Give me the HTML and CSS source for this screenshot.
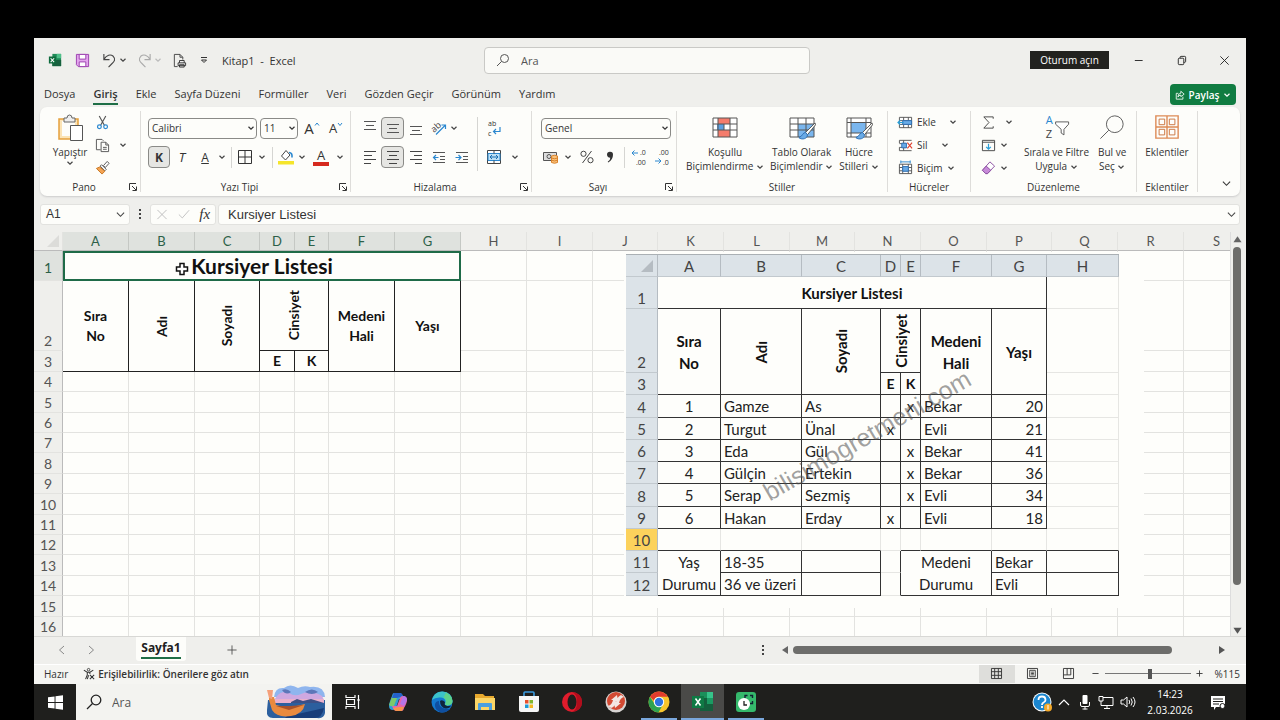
FILE: index.html
```html
<!DOCTYPE html>
<html lang="tr">
<head>
<meta charset="utf-8">
<title>Kitap1 - Excel</title>
<link rel="stylesheet" href="styles.css">
</head>
<body>
<svg class="defs" aria-hidden="true">
  <symbol id="chev" viewBox="0 0 8 8"><path d="M1.5 2.8 4 5.2 6.500 2.800" fill="none" stroke="currentColor" stroke-width="1.2"/></symbol>
  <symbol id="launch" viewBox="0 0 8 8"><path d="M.5 7V.5H7M3 3l4 4M7.500 3.500v4h-4" fill="none" stroke="#333" stroke-width="1"/></symbol>
  <symbol id="brush" viewBox="0 0 20 20"><path d="M19 1 9 11l2 2.500L19.500 3z" fill="#fdfdfa" stroke="#555" stroke-width="1"/><path d="M9 11c-3 0-3 4-7 5.500 3 2.500 9 1.500 9-3z" fill="#6aabe6" stroke="#2c6fb5" stroke-width="1"/></symbol>
</svg>
<div class="screen">
<main class="app">
  <header class="titlebar">
    <div class="quick">
      <svg class="i-xl" viewBox="0 0 16 16"><path d="M5 1h10v14H5z" fill="#1e8a57"/><path d="M10 1h5v5h-5z" fill="#4fc08a"/><path d="M5 8h10v7H5z" fill="#17603e"/><path d="M1 4h8v8H1z" fill="#0e6b3d"/><path d="m3 6 4 4.500M7 6l-4 4.500" stroke="#fff" stroke-width="1.200"/></svg>
      <button class="tb-save" aria-label="Kaydet"><svg viewBox="0 0 16 16"><path d="M1.500 1.500h13v13h-11l-2-2z" fill="#e3a5ee" stroke="#9b3fae"/><path d="M4.500 1.500h7v5h-7zM4.500 9.500h7v5h-7z" fill="#fff" stroke="#9b3fae"/></svg></button>
      <button class="tb-undo" aria-label="Geri al"><svg viewBox="0 0 16 16"><path d="M2 1v6h6M2.200 6.500C5 2 9 1 12 3.500c3 3 1 6-1.500 8L7 15" fill="none" stroke="#444" stroke-width="1.200"/></svg><svg class="chev"><use href="#chev"/></svg></button>
      <button class="tb-undo dim" aria-label="Yinele"><svg viewBox="0 0 16 16"><path d="M14 1v6H8M13.800 6.500C11 2 7 1 4 3.500c-3 3-1 6 1.500 8L9 15" fill="none" stroke="#aaa" stroke-width="1.200"/></svg><svg class="chev"><use href="#chev"/></svg></button>
      <button class="tb-print" aria-label="Baskı önizleme"><svg viewBox="0 0 16 16"><path d="M6 14.500H2.500v-13h6l3 3V7M8.500 1.500v3h3" fill="none" stroke="#444"/><path d="M6.500 10.500h8v3h-8zM8 10.500V8h5v2.500M8 12.500h5v2.500H8z" fill="#eee" stroke="#333"/></svg></button>
      <button class="tb-more" aria-label="Özelleştir"><svg viewBox="0 0 10 10"><path d="M2 2.500h6M2.500 5 5 7.500 7.500 5z" fill="none" stroke="#333"/></svg></button>
      <h1>Kitap1&nbsp; -&nbsp; Excel</h1>
    </div>
    <label class="search"><svg viewBox="0 0 14 14"><circle cx="8.500" cy="5.500" r="4" fill="none" stroke="#555"/><path d="M5.500 8.500 1 13" stroke="#555"/></svg><input type="search" placeholder="Ara" aria-label="Ara"></label>
    <div class="win">
      <button class="signin">Oturum açın</button>
      <button aria-label="Küçült"><svg viewBox="0 0 12 12"><path d="M2 6h8.500" stroke="#222"/></svg></button>
      <button aria-label="Geri yükle"><svg viewBox="0 0 12 12"><path d="M2.500 4.500q0-1 1-1h4q1 0 1 1v5q0 1-1 1h-4q-1 0-1-1zM4.500 3.500v-1q0-1 1-1h4q1 0 1 1v4.500q0 1-1 1h-1" fill="none" stroke="#222"/></svg></button>
      <button aria-label="Kapat"><svg viewBox="0 0 12 12"><path d="m1.500 1.500 9 9m0-9-9 9" stroke="#222"/></svg></button>
    </div>
  </header>
  <nav class="tabs">
    <a href="#">Dosya</a><a href="#" class="on">Giriş</a><a href="#">Ekle</a><a href="#">Sayfa Düzeni</a><a href="#">Formüller</a><a href="#">Veri</a><a href="#">Gözden Geçir</a><a href="#">Görünüm</a><a href="#">Yardım</a>
    <button class="share"><svg class="s10" viewBox="0 0 12 12"><path d="M4 4H1.500v7h8V8M7 1.500 11 5 7 8V6.200Q4.500 6 3.500 8.500 3.500 4 7 3.800z" fill="none" stroke="#fff"/></svg>Paylaş<svg class="chev"><use href="#chev"/></svg></button>
  </nav>

  <section class="ribbon">
    <div class="group g-pano">
      <div class="body">
        <button class="big"><svg class="s28" viewBox="0 0 28 28"><path d="M3 5h19v20H3z" fill="#fbe3b5" stroke="#e5a03c" stroke-width="1.500"/><path d="M6 7h13v15H6z" fill="#fdfdfa"/><path d="M8 8V4h3q0-3 2.500-3T16 4h3v4z" fill="#eee" stroke="#666"/><path d="M14.500 11.500h12v15h-12z" fill="#fff" stroke="#555"/></svg><span>Yapıştır</span><svg class="chev"><use href="#chev"/></svg></button>
        <div class="three">
          <button aria-label="Kes"><svg class="s16" viewBox="0 0 16 16"><path d="M4.500 1 10 11M11.500 1 6 11" stroke="#555" stroke-width="1.200"/><circle cx="4.700" cy="12.500" r="2" fill="none" stroke="#2b88d0" stroke-width="1.300"/><circle cx="11.300" cy="12.500" r="2" fill="none" stroke="#2b88d0" stroke-width="1.300"/></svg></button>
          <button aria-label="Kopyala"><svg class="s16" viewBox="0 0 16 16"><path d="M6 12.500H1.500v-11h6L9 3M6.500 4.500h5l3 3v7h-8zM11.500 4.500v3h3M8.500 10h4M8.500 12h4" fill="none" stroke="#555"/></svg><svg class="chev far"><use href="#chev"/></svg></button>
          <button aria-label="Biçim boyacısı"><svg class="s16" viewBox="0 0 16 16"><path d="m9 6 4-4.500 2 2L11 8z" fill="#fff" stroke="#555"/><path d="m7 5 5 5-1.500 1.500-5-5z" fill="#fff" stroke="#555"/><path d="M5 7.500 1.500 9l6 6 3-3z" fill="#f4a455" stroke="#c9741c"/></svg></button>
        </div>
      </div>
      <footer><span>Pano</span><button aria-label="Pano ayarları"><svg><use href="#launch"/></svg></button></footer>
    </div>

    <div class="group g-font">
      <div class="body col">
        <div class="row"><select class="w-font" aria-label="Yazı tipi"><option>Calibri</option></select><select class="w-size" aria-label="Yazı boyutu"><option>11</option></select><button class="w24 glyph">A<svg class="sup" viewBox="0 0 6 6"><path d="M1 4.500 3 2l2 2.500" fill="none" stroke="#2b88d0"/></svg></button><button class="w24 glyph small">A<svg class="sup" viewBox="0 0 6 6"><path d="M1 2l2 2.500L5 2" fill="none" stroke="#2b88d0"/></svg></button></div>
        <div class="row"><button class="w22 on bold">K</button><button class="w24 it">T</button><button class="w22 un">A</button><button class="w12" aria-label="Altı çizili seçenekleri"><svg class="chev"><use href="#chev"/></svg></button><i class="vr"></i><button class="w20" aria-label="Kenarlıklar"><svg class="s16" viewBox="0 0 16 16"><path d="M1.500 1.500h13v13h-13zM8 1.500v13M1.500 8h13" fill="none" stroke="#333"/></svg></button><button class="w14" aria-label="Kenarlık seçenekleri"><svg class="chev"><use href="#chev"/></svg></button><i class="vr"></i><button class="w20" aria-label="Dolgu rengi"><svg class="s16" viewBox="0 0 16 16"><path d="M0 12h16v3.500H0z" fill="#f5e52a"/><path d="M8 1.500 3.500 7 7.500 11 12 6z" fill="#fff" stroke="#444"/><path d="M11 3.500q3.500 0 3 5" fill="none" stroke="#2b88d0" stroke-width="1.600"/></svg></button><button class="w12" aria-label="Dolgu seçenekleri"><svg class="chev"><use href="#chev"/></svg></button><button class="w24 fc" aria-label="Yazı tipi rengi">A</button><button class="w12" aria-label="Renk seçenekleri"><svg class="chev"><use href="#chev"/></svg></button></div>
      </div>
      <footer><span>Yazı Tipi</span><button aria-label="Yazı tipi ayarları"><svg><use href="#launch"/></svg></button></footer>
    </div>

    <div class="group g-align">
      <div class="body">
        <div class="col">
          <div class="row"><button class="w23" aria-label="Üste hizala"><svg class="s14" viewBox="0 0 14 14"><path d="M1 .5h12M3 4.500h8M1 8.500h12" stroke="#555"/></svg></button><button class="w23 on" aria-label="Ortaya hizala"><svg class="s14" viewBox="0 0 14 14"><path d="M1 3.500h12M3 7.500h8M1 11.500h12" stroke="#555"/></svg></button><button class="w23" aria-label="Alta hizala"><svg class="s14" viewBox="0 0 14 14"><path d="M1 5.500h12M3 9.500h8M1 13.500h12" stroke="#555"/></svg></button><button class="w23" aria-label="Yönlendirme"><svg class="s16" viewBox="0 0 16 16"><path d="M5 14.500 14 5.500M10.500 5h4v4" fill="none" stroke="#2b88d0" stroke-width="1.200"/><text x="0" y="11" transform="rotate(-42 4 8)" class="t9">ab</text></svg></button><svg class="chev"><use href="#chev"/></svg></div>
          <div class="row"><button class="w23" aria-label="Sola hizala"><svg class="s14" viewBox="0 0 14 14"><path d="M1 1.500h12M1 5.500h8M1 9.500h12M1 13.500h7" stroke="#444"/></svg></button><button class="w23 on" aria-label="Ortala"><svg class="s14" viewBox="0 0 14 14"><path d="M1 1.500h12M3 5.500h8M1 9.500h12M3 13.500h8" stroke="#444"/></svg></button><button class="w23" aria-label="Sağa hizala"><svg class="s14" viewBox="0 0 14 14"><path d="M1 1.500h12M5 5.500h8M1 9.500h12M6 13.500h7" stroke="#444"/></svg></button><button class="w23" aria-label="Girintiyi azalt"><svg class="s14" viewBox="0 0 14 14"><path d="M1 2.500h12M8 6.500h5M8 9.500h5M1 12.500h12" stroke="#555"/><path d="M6.500 7.500h-5M4 5 1.500 7.500 4 10" fill="none" stroke="#2b88d0" stroke-width="1.200"/></svg></button><button class="w23" aria-label="Girintiyi artır"><svg class="s14" viewBox="0 0 14 14"><path d="M1 2.500h12M8 6.500h5M8 9.500h5M1 12.500h12" stroke="#555"/><path d="M.5 7.500h5M3.500 5 6 7.500 3.500 10" fill="none" stroke="#2b88d0" stroke-width="1.200"/></svg></button></div>
        </div>
        <i class="vr tall"></i>
        <div class="col">
          <div class="row"><button class="w23" aria-label="Metni kaydır"><svg class="s16" viewBox="0 0 16 16"><text x="2" y="6" class="t8">ab</text><text x="2" y="16" class="t8">c</text><path d="M14 7v4.500H8M10 9l-2.500 2.500L10 14" fill="none" stroke="#2b88d0" stroke-width="1.200"/></svg></button></div>
          <div class="row"><button class="w23" aria-label="Birleştir"><svg class="s14" viewBox="0 0 14 14"><path d="M.5.5h13v13H.5z" fill="#fff" stroke="#444"/><path d="M1 3.500h12v7H1z" fill="#bfe1f5" stroke="#2b88d0"/><path d="M7 .5v3M7 10.500v3" stroke="#444"/><path d="M3 7h8M5 5 3 7l2 2M9 5l2 2-2 2" fill="none" stroke="#1b6eb0"/></svg></button><button class="w20" aria-label="Birleştir seçenekleri"><svg class="chev"><use href="#chev"/></svg></button></div>
        </div>
      </div>
      <footer><span>Hizalama</span><button aria-label="Hizalama ayarları"><svg><use href="#launch"/></svg></button></footer>
    </div>

    <div class="group g-num">
      <div class="body col">
        <div class="row"><select class="w-num" aria-label="Sayı biçimi"><option>Genel</option></select></div>
        <div class="row"><button class="w20" aria-label="Para birimi"><svg class="s16" viewBox="0 0 16 16"><path d="M.5 3.500h13v8H.5z" fill="#ddd" stroke="#555"/><circle cx="6" cy="7.500" r="2" fill="none" stroke="#555"/><path d="M8.500 7q3.500-1.500 6 0v6.500q-3 1.500-6 0z" fill="#f9c27c" stroke="#d9822b"/><path d="M8.500 9q3 1.500 6 0M8.500 11.200q3 1.500 6 0" fill="none" stroke="#d9822b"/></svg></button><button class="w14" aria-label="Para birimi seçenekleri"><svg class="chev"><use href="#chev"/></svg></button><button class="w24" aria-label="Yüzde"><svg class="s14" viewBox="0 0 14 14"><circle cx="3.500" cy="3.800" r="2.600" fill="none" stroke="#444"/><circle cx="10.500" cy="10.200" r="2.600" fill="none" stroke="#444"/><path d="M11.500 1 2.500 13" stroke="#444"/></svg></button><button class="w22" aria-label="Virgül"><svg class="s14" viewBox="0 0 14 14"><path d="M4 4.500a3 3 0 1 1 6 .3q0 5-4.800 7.700l-.5-.8Q7.500 10 7.300 7.700 4 7.500 4 4.500z" fill="#333"/></svg></button><i class="vr"></i><button class="w22" aria-label="Ondalık artır"><svg class="s16" viewBox="0 0 16 16"><text x="9" y="6" class="t8">.0</text><text x="5" y="16" class="t8">.00</text><path d="M7 4H1M3.500 1.500 1 4l2.500 2.500" fill="none" stroke="#2b88d0"/></svg></button><button class="w24" aria-label="Ondalık azalt"><svg class="s16" viewBox="0 0 16 16"><text x="5" y="6" class="t8">.00</text><text x="9" y="16" class="t8">.0</text><path d="M1 12h6M4.500 9.500 7 12l-2.500 2.500" fill="none" stroke="#2b88d0"/></svg></button></div>
      </div>
      <footer><span>Sayı</span><button aria-label="Sayı ayarları"><svg><use href="#launch"/></svg></button></footer>
    </div>

    <div class="group g-style">
      <div class="body">
        <button class="big"><svg class="s28" viewBox="0 0 28 28"><path d="M2 4h24v19H2z" fill="#fff"/><path d="M7 4h12v6H7zM7 16h12v7H7z" fill="#f47c6c"/><path d="M6 10h7v6H6z" fill="#5c9fe0"/><path d="M2 4h24v19H2zM2 10h24M2 16h24M7 4v19M13 10v6M19 4v19" fill="none" stroke="#555"/></svg><span>Koşullu<br>Biçimlendirme <svg class="chev"><use href="#chev"/></svg></span></button>
        <button class="big"><svg class="s28" viewBox="0 0 28 28"><path d="M2 4h24v19H2z" fill="#fff"/><path d="M10 10h16v13H10z" fill="#7ab6ee"/><path d="M2 4h24v19H2zM2 10h24M2 16h24M10 4v19M18 4v19" fill="none" stroke="#555"/><use href="#brush" x="9" y="8" width="19" height="19"/></svg><span>Tablo Olarak<br>Biçimlendir <svg class="chev"><use href="#chev"/></svg></span></button>
        <button class="big"><svg class="s28" viewBox="0 0 28 28"><path d="M2 4h24v19H2z" fill="#fff" stroke="#555"/><path d="M6 9h15v10H6z" fill="#7ab6ee"/><path d="M2 8.500h24M2 19h24M6 4v19M21 4v19" stroke="#555"/><use href="#brush" x="9" y="8" width="19" height="19"/></svg><span>Hücre<br>Stilleri <svg class="chev"><use href="#chev"/></svg></span></button>
      </div>
      <footer><span>Stiller</span></footer>
    </div>

    <div class="group g-cell">
      <div class="body three">
        <button><svg class="s16" viewBox="0 0 16 16"><path d="M1.500 2.500h13v11h-13zM1.500 6h13M1.500 10h13M6 2.500v11M11 2.500v11" fill="#fff" stroke="#555"/><path d="M5 6h9.500v4H5z" fill="#6aabe6" stroke="#2c6fb5"/><path d="M6 8H0M2.500 5.500 0 8l2.500 2.500" fill="none" stroke="#2b9fd8" stroke-width="1.300"/></svg>Ekle<svg class="chev c1"><use href="#chev"/></svg></button>
        <button><svg class="s16" viewBox="0 0 16 16"><path d="M1.500 2.500h13M1.500 13.500h13M1.500 6H9M1.500 10H9M6 2.500v11M1.500 2.500v3M1.500 10v3.500" fill="none" stroke="#555"/><path d="M4 5.500h5v5H4z" fill="#6aabe6" stroke="#2c6fb5"/><path d="m10 5 5 6M15 5l-5 6" stroke="#e0402f" stroke-width="1.200"/></svg>Sil<svg class="chev c2"><use href="#chev"/></svg></button>
        <button><svg class="s16" viewBox="0 0 16 16"><path d="M1.500 4.500h13v10h-13zM1.500 8h13M1.500 11.500h13M5 4.500v10M11 4.500v10" fill="#fff" stroke="#555"/><path d="M5 7h6v5H5z" fill="#6aabe6" stroke="#2c6fb5"/><path d="M3 .5v3M13 .5v3M3 2h10" stroke="#2b88d0"/></svg>Biçim<svg class="chev c3"><use href="#chev"/></svg></button>
      </div>
      <footer><span>Hücreler</span></footer>
    </div>

    <div class="group g-edit">
      <div class="body">
        <div class="three">
          <button aria-label="Otomatik toplam"><svg class="s16" viewBox="0 0 16 16"><path d="M13 4V2H3l5.500 6L3 14h10v-2" fill="none" stroke="#444"/></svg><svg class="chev far"><use href="#chev"/></svg></button>
          <button aria-label="Doldur"><svg class="s16" viewBox="0 0 16 16"><path d="M1.500 2.500h13v11h-13zM1.500 4.500h13" fill="none" stroke="#444"/><path d="M8 6v6M5.500 9.500 8 12l2.500-2.500" fill="none" stroke="#2b9fd8" stroke-width="1.300"/></svg><svg class="chev"><use href="#chev"/></svg></button>
          <button aria-label="Temizle"><svg class="s16" viewBox="0 0 16 16"><path d="m9.500 2 5 4.500-7.500 8H5L1.500 11z" fill="#fff" stroke="#8b4fa0"/><path d="m5.500 6.500 5 4.500L7 14.500H5L1.500 11z" fill="#c78bd8" stroke="#8b4fa0"/></svg><svg class="chev"><use href="#chev"/></svg></button>
        </div>
        <button class="big"><svg class="s28" viewBox="0 0 28 28"><text x="2" y="11" class="t12 blue">A</text><text x="2" y="26" class="t12">Z</text><path d="M12.500 8.500h14v2.500l-5 5.500v6l-3-2v-4l-6-5.500z" fill="#fff" stroke="#555"/></svg><span>Sırala ve Filtre<br>Uygula <svg class="chev"><use href="#chev"/></svg></span></button>
        <button class="big"><svg class="s28" viewBox="0 0 28 28"><circle cx="17" cy="11" r="9" fill="none" stroke="#555"/><path d="M10.500 17.500 1.500 26.500" stroke="#555"/></svg><span>Bul ve<br>Seç <svg class="chev"><use href="#chev"/></svg></span></button>
      </div>
      <footer><span>Düzenleme</span></footer>
    </div>

    <div class="group g-add">
      <div class="body">
        <button class="big"><svg class="s28" viewBox="0 0 28 28"><path d="M2 2h24v24H2zM14 2v24M2 14h24" fill="none" stroke="#dd8a55" stroke-width="1.500"/><path d="M5.500 5.500h6v6h-6zM16.500 5.500h6v6h-6zM5.500 16.500h6v6h-6zM16.500 16.500h6v6h-6z" fill="none" stroke="#c9733c"/></svg><span>Eklentiler</span></button>
      </div>
      <footer><span>Eklentiler</span></footer>
    </div>
    <button class="collapse" aria-label="Şeridi daralt"><svg viewBox="0 0 10 10"><path d="m1 3 4 4 4-4" fill="none" stroke="#333" stroke-width="1.200"/></svg></button>
  </section>

  <section class="formula">
    <button class="namebox">A1<svg viewBox="0 0 10 10"><path d="m1 3 4 4 4-4" fill="none" stroke="#444" stroke-width="1.200"/></svg></button>
    <svg class="dots" viewBox="0 0 4 12"><path d="M1 1h2v2H1zM1 5h2v2H1zM1 9h2v2H1z" fill="#444"/></svg>
    <div class="fx"><button aria-label="İptal"><svg viewBox="0 0 12 12"><path d="m1 1 10 10M11 1 1 11" stroke="#bbb"/></svg></button><button aria-label="Gir"><svg viewBox="0 0 14 12"><path d="m1 6 4 4 8-9" fill="none" stroke="#bbb"/></svg></button><button class="fxb">fx</button></div>
    <label class="fbar"><input value="Kursiyer Listesi" aria-label="Formül çubuğu"><svg viewBox="0 0 10 10"><path d="m1 3 4 4 4-4" fill="none" stroke="#444" stroke-width="1.200"/></svg></label>
  </section>

  <section class="sheet">
    <div class="view">
      <table class="grid">
        <colgroup><col class="c29"><col><col><col class="c65"><col class="c35"><col class="c34"><col><col><col><col><col class="c65"><col><col><col class="c65"><col><col><col class="c65"><col><col><col></colgroup>
        <thead><tr><th class="corner"><svg viewBox="0 0 12 12"><path d="M12 0v12H0z" fill="#dcdcd9"/></svg></th></tr></thead>
        <tbody>
          <tr class="r1"><th class="sel">1</th><td class="title" colspan="7">Kursiyer Listesi</td></tr>
          <tr class="r2"><th>2</th><td class="h" rowspan="2">Sıra<br>No</td><td class="h" rowspan="2"><span class="rot">Adı</span></td><td class="h" rowspan="2"><span class="rot">Soyadı</span></td><td class="h" colspan="2"><span class="rot">Cinsiyet</span></td><td class="h" rowspan="2">Medeni<br>Hali</td><td class="h" rowspan="2">Yaşı</td></tr>
          <tr class="r3"><th>3</th><td class="h">E</td><td class="h">K</td></tr>
        </tbody>
      </table>
      <svg class="cursor" viewBox="0 0 14 14"><path d="M5 1.500h4V5h3.500v4H9v3.500H5V9H1.500V5H5z" fill="#fff" stroke="#111" stroke-width="1.500"/></svg>
      <figure class="sample">
        <table class="mini">
          <colgroup><col class="m32"><col class="m63"><col class="m81"><col class="m79"><col class="m20"><col class="m20"><col class="m71"><col class="m55"><col class="m72"></colgroup>
          <thead><tr><th><svg viewBox="0 0 12 12"><path d="M12 0v12H0z" fill="#b5bcc2"/></svg></th><th>A</th><th>B</th><th>C</th><th>D</th><th>E</th><th>F</th><th>G</th><th>H</th></tr></thead>
          <tbody>
            <tr class="q1"><th>1</th><td colspan="7" class="k c b">Kursiyer Listesi</td><td></td></tr>
            <tr class="q2"><th>2</th><td rowspan="2" class="k c b">Sıra<br>No</td><td rowspan="2" class="k c b"><span class="rot">Adı</span></td><td rowspan="2" class="k c b"><span class="rot">Soyadı</span></td><td colspan="2" class="k c b"><span class="rot">Cinsiyet</span></td><td rowspan="2" class="k c b">Medeni<br>Hali</td><td rowspan="2" class="k c b">Yaşı</td><td></td></tr>
            <tr><th>3</th><td class="k c b s">E</td><td class="k c b s">K</td><td></td></tr>
            <tr><th>4</th><td class="k c">1</td><td class="k">Gamze</td><td class="k">As</td><td class="k c"></td><td class="k c">x</td><td class="k">Bekar</td><td class="k r">20</td><td></td></tr>
            <tr><th>5</th><td class="k c">2</td><td class="k">Turgut</td><td class="k">Ünal</td><td class="k c">x</td><td class="k c"></td><td class="k">Evli</td><td class="k r">21</td><td></td></tr>
            <tr><th>6</th><td class="k c">3</td><td class="k">Eda</td><td class="k">Gül</td><td class="k c"></td><td class="k c">x</td><td class="k">Bekar</td><td class="k r">41</td><td></td></tr>
            <tr><th>7</th><td class="k c">4</td><td class="k">Gülçin</td><td class="k">Ertekin</td><td class="k c"></td><td class="k c">x</td><td class="k">Bekar</td><td class="k r">36</td><td></td></tr>
            <tr><th>8</th><td class="k c">5</td><td class="k">Serap</td><td class="k">Sezmiş</td><td class="k c"></td><td class="k c">x</td><td class="k">Evli</td><td class="k r">34</td><td></td></tr>
            <tr><th>9</th><td class="k c">6</td><td class="k">Hakan</td><td class="k">Erday</td><td class="k c">x</td><td class="k c"></td><td class="k">Evli</td><td class="k r">18</td><td></td></tr>
            <tr><th class="gold">10</th><td class="kb"></td><td class="kb"></td><td class="kb"></td><td></td><td class="kb"></td><td class="kb"></td><td class="kb"></td><td class="kb"></td></tr>
            <tr><th>11</th><td rowspan="2" class="k c two">Yaş<br>Durumu</td><td class="k">18-35</td><td class="k"></td><td class="kr"></td><td colspan="2" rowspan="2" class="k c two">Medeni<br>Durumu</td><td class="k">Bekar</td><td class="k"></td></tr>
            <tr><th>12</th><td class="k">36 ve üzeri</td><td class="k"></td><td class="kr"></td><td class="k">Evli</td><td class="k"></td></tr>
          </tbody>
        </table>
        <span class="mark">bilisimogretmeni.com</span>
      </figure>
    </div>
    <div class="vscroll"><svg viewBox="0 0 10 8"><path d="m5 1 4.500 6.500h-9z" fill="#666"/></svg><i></i><svg viewBox="0 0 10 8"><path d="m5 7 4.500-6.500h-9z" fill="#555"/></svg></div>
  </section>

  <section class="sheets">
    <button class="nav" aria-label="Önceki"><svg viewBox="0 0 10 10"><path d="M7 1 2.500 5 7 9" fill="none" stroke="#888"/></svg></button>
    <button class="nav" aria-label="Sonraki"><svg viewBox="0 0 10 10"><path d="m3 1 4.500 4L3 9" fill="none" stroke="#888"/></svg></button>
    <button class="stab"><span>Sayfa1</span></button>
    <button class="add" aria-label="Yeni sayfa"><svg viewBox="0 0 12 12"><path d="M6 .5v11M.5 6h11" stroke="#444"/></svg></button>
    <div class="hscroll"><svg class="dots" viewBox="0 0 4 12"><path d="M1 1h2v2H1zM1 5h2v2H1zM1 9h2v2H1z" fill="#444"/></svg><svg class="ar" viewBox="0 0 8 10"><path d="M1 5 7 1v8z" fill="#666"/></svg><i></i><svg class="ar" viewBox="0 0 8 10"><path d="M7 5 1 1v8z" fill="#555"/></svg></div>
  </section>

  <section class="status">
    <span>Hazır</span>
    <button class="acc"><svg class="s14" viewBox="0 0 14 14"><circle cx="6.500" cy="2" r="1.500" fill="none" stroke="#333"/><path d="M1 2.500 5 5v3l-2 5M12 2.500 8 5v2M5 5h3M6.500 8.500 5 13M8 8l5 5M13 8l-5 5" fill="none" stroke="#333" stroke-width="1.200"/></svg>Erişilebilirlik: Önerilere göz atın</button>
    <div class="zoom">
      <button class="vw on" aria-label="Normal"><svg viewBox="0 0 12 12"><path d="M.5.500h11v11H.5zM.5 4h11M.5 8h11M4 .5v11M8 .5v11" fill="none" stroke="#333"/></svg></button>
      <button class="vw" aria-label="Sayfa düzeni"><svg viewBox="0 0 12 12"><path d="M.5.500h11v11H.5zM3 2.500h6v7H3zM4.500 4.500h3M4.500 6h3M4.500 7.500h3" fill="none" stroke="#333"/></svg></button>
      <button class="vw" aria-label="Sayfa sonu"><svg viewBox="0 0 12 12"><path d="M.5.500h11v11H.5zM.5 7.500h8v-7M4.500.500v7" fill="none" stroke="#333"/></svg></button>
      <button class="pm" aria-label="Uzaklaştır"><svg viewBox="0 0 8 8"><path d="M.5 4h7" stroke="#333"/></svg></button>
      <input type="range" min="10" max="220" value="120" aria-label="Yakınlaştırma">
      <button class="pm" aria-label="Yakınlaştır"><svg viewBox="0 0 8 8"><path d="M.5 4h7M4 .5v7" stroke="#333"/></svg></button>
      <span>%115</span>
    </div>
  </section>
</main>

<nav class="taskbar">
  <button class="start" aria-label="Başlat"><svg viewBox="0 0 16 16"><path d="m0 2.500 7-1v6H0zM8 1.400 16 .2v7.300H8zM0 8.500h7v6l-7-1zM8 8.500h8v7.300l-8-1.200z" fill="#fff"/></svg></button>
  <label class="tsearch"><svg class="s16" viewBox="0 0 16 16"><circle cx="10" cy="6" r="4.800" fill="none" stroke="#222" stroke-width="1.300"/><path d="M6.500 9.500 1 15" stroke="#222" stroke-width="1.300"/></svg><input type="search" placeholder="Ara" aria-label="Windows'ta ara">
    <svg class="boat" viewBox="0 0 62 34"><path d="M9 12Q10 2 19 3q6-5 14 0 6-3 12-1 14-2 15 10z" fill="#8fb5ee"/><path d="M12 11q5-6 12-3 6 4 12 1 10-5 21 2l2 4H9z" fill="#cfa8e0"/><path d="M17 5q5-2 9 2-5 4-9-2zM40 7q7-5 13 0-6 4-13 0z" fill="#5d76b8"/><path d="M3 15h57v13q-1 6-8 5H8q-7 0-6-8z" fill="#2c5f9e"/><path d="M7 14h52v4H7z" fill="#e9b1cd"/><path d="m26 17 6-3 6 2 8-2 13 4H26z" fill="#3c4f86"/><path d="M22 31q16-3 37-8-2 10-9 10H20z" fill="#173d7a"/><path d="M4 12h5l2 8q12 4 29-1-2 10-14 12-14 2-19-6L4 15z" fill="#e98a3e"/><path d="m11 21 13 4 15-5-14 1z" fill="#a8512a"/><path d="M2 5h6l-1 9-3-1z" fill="#f5a07a"/></svg>
  </label>
  <div class="apps">
    <button aria-label="Görev görünümü"><svg class="s16" viewBox="0 0 16 16"><path d="M1 1v2.500h9V1M1 15v-2.500h9V15M1.500 5.500h8v5h-8zM13.500 1v14M12 6h3" fill="none" stroke="#fff" stroke-width="1.200"/></svg></button>
    <button aria-label="Copilot"><svg class="s22" viewBox="0 0 22 22"><path d="M7 2h6q2 0 3 3l1 3h-5L9 17q-1 2-3 2-4 0-4-4 0-3 3-10 .500-3 2-3z" fill="#2f9bd8"/><path d="M5 6 2 14q2 2 5 1l3-8z" fill="#7cc96b"/><path d="M7 2h6q2 0 3 3l-6 2H5z" fill="#2460c9"/><path d="M15 20H9q-2 0-3-3l-1-2h5l3-8q1-2 3-2 4 0 4 4 0 3-3 8-.500 3-2 3z" fill="#e765a8"/><path d="m17 15 3-6q0-4-4-4l-3 8z" fill="#b674e8"/><path d="M15 20H9q-2 0-3-3l6-1h5z" fill="#f7934d"/></svg></button>
    <button aria-label="Edge"><svg class="s22" viewBox="0 0 22 22"><circle cx="11" cy="11" r="10.500" fill="#1479cf"/><path d="M1 9Q3 .5 11.500.5 21 1 21.500 10q0 4-5 4.500-3.500 0-2-2.500Q15 7 10 6.500 4 6 1 9z" fill="#3cc3c9"/><path d="M15 1.500q6 3 6.500 8.500 0 4-5 4.500-3.500 0-2-2.500 1.500-4-2-5.500z" fill="#5fd38a"/><path d="M8 10q-1 8 11 8-4 4.500-10 3.200Q3 18 4 13q1-3 4-3z" fill="#0f4fa0"/><path d="M9 10q2-2 5 1-1 3 1 3.500 2 1 5 0-1 3-5 3-6-1-6-7.500z" fill="#10243d"/></svg></button>
    <button aria-label="Dosya Gezgini"><svg class="s22" viewBox="0 0 22 22"><path d="M1 3h8l2 2h9v14H1z" fill="#e8a92e"/><path d="M1 7h20v12H1z" fill="#fbd566"/><path d="M4 19v-6q0-1 1-1h12q1 0 1 1v6h-3v-3H7v3z" fill="#4a9fe0"/></svg></button>
    <button aria-label="Microsoft Store"><svg class="s22" viewBox="0 0 22 22"><path d="M6 6V2q0-1 1-1h8q1 0 1 1v4" fill="none" stroke="#3a9be0" stroke-width="1.600"/><path d="M1 5h20v14q0 2-2 2H3q-2 0-2-2z" fill="#f6f6f6"/><path d="M7 9h3.500v3.500H7z" fill="#e8502c"/><path d="M11.500 9H15v3.500h-3.500z" fill="#7fb72d"/><path d="M7 13.500h3.500V17H7z" fill="#1c9bd8"/><path d="M11.500 13.500H15V17h-3.500z" fill="#f5b81f"/></svg></button>
    <button aria-label="Opera"><svg class="s22" viewBox="0 0 22 22"><circle cx="11" cy="11" r="10" fill="#e01c2c"/><path d="M11 1q10 1 10 10t-10 10q5-2 5-10T11 1z" fill="#b20d1c"/><ellipse cx="11" cy="11" rx="4.500" ry="7.500" fill="#1f1f1d"/></svg></button>
    <button aria-label="Dönüştürücü"><svg class="s22" viewBox="0 0 22 22"><circle cx="11" cy="11" r="10.500" fill="#d8d4d2"/><circle cx="11" cy="10" r="9" fill="#d34a33"/><path d="M3 15q4-1 5-6H6l6-5 1 6h-2q-1 6-5 7zM19 6q-4 1-5 6h2l-6 5-1-6h2q1-5 5-7z" fill="#f3e6e2"/></svg></button>
    <button class="run" aria-label="Chrome"><svg class="s22" viewBox="0 0 22 22"><circle cx="11" cy="11" r="10.500" fill="#f8c52c"/><path d="M1.900 5.800A10.500 10.500 0 0 1 20 5.800H11q-4 0-5 4z" fill="#e23c2e"/><path d="M1.900 5.800A10.500 10.500 0 0 0 10.500 21.500L15 13.500H7z" fill="#2fa350"/><circle cx="11" cy="11" r="5.200" fill="#fff"/><circle cx="11" cy="11" r="4.200" fill="#2f74e0"/></svg></button>
    <button class="run active" aria-label="Excel"><svg class="s22" viewBox="0 0 22 22"><path d="M8 1h13v19H8z" fill="#1b8f5a"/><path d="M15 1h6v6h-6z" fill="#36c38a"/><path d="M8 7h7v6H8zM8 13h13v7H8z" fill="#145f3d"/><path d="M15 7h6v6h-6z" fill="#1b9a62"/><path d="M0 5h12v12H0z" fill="#0f7a45"/><path d="m3.500 7.500 5 7M8.500 7.500l-5 7" stroke="#fff" stroke-width="1.500"/></svg></button>
    <button class="run" aria-label="Ekran kaydedici"><svg class="s22" viewBox="0 0 22 22"><rect x="1" y="1" width="20" height="20" rx="3" fill="#35b96c"/><circle cx="9" cy="13" r="6" fill="#fff"/><path d="M9 10v4h3" fill="none" stroke="#222" stroke-width="1.300"/><path d="M10 7V4.500h2.500M15 4.500h2.500V7M17.500 10v2.500H15" fill="none" stroke="#123" stroke-width="1.400"/></svg></button>
  </div>
  <div class="tray">
    <button class="w23" aria-label="Yardım"><svg class="s20" viewBox="0 0 20 20"><circle cx="10" cy="10" r="9.500" fill="#fff"/><circle cx="10" cy="10" r="8.500" fill="#1b86cf"/><path d="M6.500 8q0-3.500 3.500-3.500T13.500 8q0 1.500-2 2.500-1.500.7-1.500 2.500M10 14v2" fill="none" stroke="#fff" stroke-width="1.800"/><circle cx="16" cy="15.500" r="4" fill="#f3a92a"/><path d="M16 13v4.500" stroke="#fff"/></svg></button>
    <button class="w22" aria-label="Gizli simgeler"><svg class="s14" viewBox="0 0 14 14"><path d="m2 10 5-5 5 5" fill="none" stroke="#fff" stroke-width="1.200"/></svg></button>
    <button class="w20" aria-label="Mikrofon"><svg class="s16" viewBox="0 0 16 16"><rect x="5.500" y="1" width="5" height="9" rx="1" fill="#fff"/><path d="M3.500 8v3q0 1.500 1.500 1.500h6q1.500 0 1.500-1.500V8M8 13v2.500M5.500 15h5" fill="none" stroke="#fff"/></svg></button>
    <button class="w22" aria-label="Ağ"><svg class="s16" viewBox="0 0 16 16"><path d="M5 3.500h10v8H3V9M9 11.500V14M6 14.500h6M1 2.500h4V7H1zM3 7v2" fill="none" stroke="#fff"/></svg></button>
    <button class="w22" aria-label="Ses"><svg class="s16" viewBox="0 0 16 16"><path d="M1 6h2.500L7 3v10l-3.500-3H1zM9 6q1.500 2 0 4M11 4.500q2.500 3.500 0 7M13 3q4 5 0 10" fill="none" stroke="#fff"/></svg></button>
    <time><span>14:23</span><span>2.03.2026</span></time>
    <button class="note" aria-label="Bildirimler"><svg class="s16" viewBox="0 0 16 16"><path d="M1 2h14v8l-4 3H6l-2 3v-3H1z" fill="#fff"/><path d="M3 5h10M3 7.500h10M3 10h6" stroke="#1f1f1d"/><circle cx="12.500" cy="12" r="2.500" fill="#fff" stroke="#1f1f1d"/></svg></button>
  </div>
</nav>
</div>
<script src="script.js"></script>
</body>
</html>
```
FILE: styles.css
```css
* { box-sizing: border-box; }
body { margin: 0; background: #000; font-family: "Open Sans", "Noto Sans", sans-serif; font-size: 11px; color: #333; }
button, input, select { font: inherit; color: inherit; }
button { border: 0; background: none; padding: 0; display: inline-flex; align-items: center; justify-content: center; }
svg { display: block; flex: none; overflow: visible; }
i { display: block; flex: none; }
.defs { position: absolute; width: 0; height: 0; }
.chev { width: 8px; height: 8px; color: #444; }
.s10 { width: 10px; height: 10px; }
.s14 { width: 14px; height: 14px; }
.s16 { width: 16px; height: 16px; }
.s20 { width: 20px; height: 20px; }
.s22 { width: 22px; height: 22px; }
.s28 { width: 28px; height: 28px; }
.t8 { font-size: 7px; fill: #333; }
.t9 { font-size: 9px; fill: #444; }
.t12 { font-size: 12px; fill: #444; }
.t12.blue { fill: #2b88d0; }

.screen { min-height: 100vh; padding: 38px 34px 1px; display: flex; flex-direction: column; }
.app { flex: 1; display: flex; flex-direction: column; background: #efefec; min-height: 0; }

.titlebar { display: grid; grid-template-columns: 1fr 326px 1fr; align-items: center; height: 44px; padding-left: 14px; }
.quick { display: flex; align-items: center; }
.quick svg { width: 15px; height: 15px; }
.quick .chev { width: 8px; height: 8px; }
.quick .i-xl { width: 14px; height: 14px; }
.tb-save { margin-left: 13px; }
.tb-undo { margin-left: 12px; gap: 2px; }
.tb-undo.dim { margin-left: 10px; }
.tb-undo.dim .chev { color: #bbb; }
.tb-print { margin-left: 10px; }
.quick .tb-more { margin-left: 12px; }
.quick .tb-more svg { width: 10px; height: 10px; }
.titlebar h1 { margin: 0 0 0 13px; font-size: 11px; font-weight: 400; white-space: nowrap; }
.search { display: flex; align-items: center; height: 27px; border: 1px solid #c9c9c6; border-radius: 4px; background: #fafaf7; padding-left: 11px; gap: 11px; }
.search svg { width: 14px; height: 14px; }
.search input, .tsearch input { border: 0; background: none; outline: 0; padding: 0; flex: 1; min-width: 0; }
input::placeholder { color: #555; opacity: 1; }
.win { display: flex; justify-content: flex-end; align-items: center; }
.win button { width: 43px; height: 26px; }
.win svg { width: 11px; height: 11px; }
.win .signin { width: 79px; height: 18px; margin-right: 8px; background: #22221f; color: #fff; font-size: 10px; }

.tabs { display: flex; align-items: center; gap: 18px; height: 25px; padding: 0 10px; }
.tabs a { color: #333; text-decoration: none; line-height: 18px; border-bottom: 2px solid transparent; }
.tabs a.on { font-weight: 600; border-color: #1e6e46; }
.share { margin-left: auto; width: 66px; height: 21px; border-radius: 4px; background: #107c41; color: #fff; font-weight: 600; font-size: 10px; gap: 4px; }
.share .chev { color: #fff; }

.ribbon { display: flex; height: 89px; margin: 0 6px; background: #fdfdfa; border-radius: 7px; box-shadow: 0 1px 2px #ccc; font-size: 10px; padding: 4px 0 0; }
.group { display: flex; flex-direction: column; border-right: 1px solid #deddda; flex: none; margin-bottom: 4px; }
.group .body { display: flex; height: 68px; flex: none; }
.group footer { display: flex; height: 16px; flex: none; align-items: center; text-align: center; }
.group footer span { flex: 1; }
.group footer button { width: 10px; height: 10px; margin-right: 2px; }
.group footer svg { width: 8px; height: 8px; }
.g-pano { width: 101px; }
.g-font { width: 210px; }
.g-align { width: 181px; }
.g-num { width: 145px; }
.g-style { width: 211px; }
.g-cell { width: 83px; }
.g-edit { width: 166px; }
.g-add { width: 61px; }
.g-font .body, .g-align .body { padding-left: 7px; }
.g-num .body { padding-left: 9px; }
.col { display: flex; flex-direction: column; gap: 7px; padding-top: 6px; }
.row { display: flex; align-items: center; height: 22px; }
.row button { height: 22px; }
.w12 { width: 12px; } .w14 { width: 14px; } .w20 { width: 20px; } .w22 { width: 22px; } .w23 { width: 23px; } .w24 { width: 24px; }
.row .on { background: #e6e6e3; border: 1px solid #8a8a87; border-radius: 4px; }
.bold { font-size: 12px; font-weight: 700; }
.it { font-size: 13px; font-style: italic; }
.un { font-size: 12px; text-decoration: underline; }
.row .fc { font-size: 13px; line-height: 13px; height: 17px; width: 16px; margin: 0 5px; border-bottom: 4px solid #d62a1e; }
.glyph { font-size: 15px; }
.glyph.small { font-size: 13px; }
.sup { width: 6px; height: 6px; align-self: flex-start; margin-top: 4px; }
.vr { width: 1px; height: 21px; background: #d5d5d2; margin: 0 3px; }
.vr.tall { height: 54px; margin: 6px 4px 0; }
select { appearance: none; height: 21px; border: 1px solid #8a8a87; border-radius: 4px; padding: 0 3px; background: #fdfdfa url("data:image/svg+xml,%3Csvg xmlns='http://www.w3.org/2000/svg' viewBox='0 0 8 8'%3E%3Cpath d='M1.500 2.800 4 5.200 6.500 2.800' fill='none' stroke='%23333' stroke-width='1.200'/%3E%3C/svg%3E") no-repeat right 1px center / 8px 8px; }
.w-font { width: 109px; margin-right: 3px; }
.w-size { width: 38px; margin-right: 2px; }
.w-num { width: 130px; }
.big { flex-direction: column; justify-content: flex-start; padding-top: 3px; line-height: 14px; }
.big span { white-space: nowrap; margin-top: 3px; text-align: center; }
.big span .chev { display: inline-block; vertical-align: middle; }
.g-pano .big { width: 42px; margin-left: 9px; }
.three, .body.three { display: flex; flex-direction: column; justify-content: flex-start; }
.three button { height: 23px; justify-content: flex-start; gap: 4px; }
.three .s16 { width: 15px; height: 15px; }
.g-pano .three { margin-left: 4px; }
.three .far { margin-left: 5px; }
.g-style .body { padding-left: 9px; gap: 6px; }
.g-cell .body { padding-left: 10px; align-items: flex-start; }
.three .c1 { margin-left: 9px; }
.three .c2 { margin-left: 9px; }
.g-edit .body { padding-left: 10px; }
.g-edit .big { margin-left: 9px; }
.g-edit .three + .big { margin-left: 11px; }
.g-add .body { justify-content: center; }
.g-add .s28, .g-edit .s28 { width: 26px; height: 26px; margin-bottom: 2px; }
.collapse { margin-left: auto; align-self: flex-end; width: 28px; height: 18px; margin-bottom: 4px; }
.collapse svg, .namebox svg, .fbar svg { width: 9px; height: 9px; }

.formula { display: flex; align-items: center; height: 36px; padding: 0 6px; font: 13px "Liberation Sans", sans-serif; }
.formula > button, .fx, .fbar { background: #fdfdfa; height: 21px; border-radius: 3px; border: 1px solid #e2e2df; }
.namebox { width: 90px; justify-content: space-between; padding: 0 4px 0 5px; font-size: 12px; }
.dots { width: 4px; height: 12px; }
.formula .dots { margin: 0 8px; }
.fx { display: flex; width: 66px; justify-content: space-around; align-items: center; }
.fx svg { width: 12px; height: 11px; }
.fxb { font: italic 15px "Liberation Serif", serif; }
.fbar { flex: 1; margin-left: 2px; display: flex; align-items: center; padding: 0 3px 0 9px; }
.fbar input { flex: 1; min-width: 0; border: 0; outline: 0; background: none; padding: 0; }

.sheet { flex: 1; display: flex; min-height: 0; font-family: Lato, sans-serif; }
.view { position: relative; flex: 1; min-width: 0; overflow: hidden; background: #fefefb; height: 404px; border-right: 1px solid #ddd; }
table { border-collapse: separate; border-spacing: 0; table-layout: fixed; }
.grid { width: 1216px; }
.grid col { width: 66px; }
.grid .c29 { width: 29px; } .grid .c65 { width: 65px; } .grid .c35 { width: 35px; } .grid .c34 { width: 34px; }
.grid th, .grid td { padding: 0; border-right: 1px solid #e3e3e0; border-bottom: 1px solid #e3e3e0; line-height: 18px; }
.grid thead tr { height: 19px; }
.grid th { background: #efefec; font-weight: 400; font-size: 14px; color: #555; }
.grid tbody th { vertical-align: bottom; border-right-color: #bbb; }
.grid thead th { border-bottom-color: #bbb; font-size: 13px; }
.grid .corner svg { width: 12px; height: 12px; margin: 0 3px 0 auto; }
.grid thead th.sel { background: #dfe2de; color: #2c6048; border-right-color: #c5c8c4; }
.grid tbody th.sel { background: #dfe2de; color: #2c6048; line-height: 24px; }
.grid tbody tr { height: 20px; }
.grid tbody tr:nth-child(5n), .grid tbody tr:nth-child(5n+3) { height: 21px; }
.grid tbody tr.r1 { height: 30px; }
.grid tbody tr.r2 { height: 70px; }
.grid tbody tr.r3 { height: 21px; }
.grid .title { border: 2px solid #1f6b48; text-align: center; font-size: 21px; font-weight: 700; color: #111; line-height: 24px; }
.grid .h { border-color: #222; text-align: center; font-size: 14px; font-weight: 700; color: #111; line-height: 20px; }
.rot { display: inline-block; writing-mode: vertical-rl; transform: rotate(180deg); vertical-align: middle; }
.cursor { position: absolute; left: 141px; top: 30px; width: 14px; height: 14px; }

.sample { position: absolute; left: 590px; top: 20px; width: 520px; height: 356px; margin: 0; padding: 2px 0 0 2px; background: #fefefb; }
.mini { width: 493px; border-top: 1px solid #aab0b4; }
.m32 { width: 32px; } .m63 { width: 63px; } .m81 { width: 81px; } .m79 { width: 79px; } .m20 { width: 20px; } .m71 { width: 71px; } .m55 { width: 55px; } .m72 { width: 72px; }
.mini tr { height: 22px; }
.mini tbody tr:nth-child(4n) { height: 23px; }
.mini tbody .q1 { height: 32px; }
.mini tbody .q2 { height: 64px; }
.mini th { padding: 0; background: #dce3e8; font-size: 15px; font-weight: 400; color: #444; line-height: 20px; border-right: 1px solid #b5bcc2; border-bottom: 1px solid #c2c9ce; vertical-align: bottom; }
.mini th svg { width: 12px; height: 12px; margin: 0 4px 4px auto; }
.mini th.gold { background: #fcd25c; }
.mini td { padding: 0 3px; font-size: 15px; line-height: 20px; color: #222; border-right: 1px solid #e6e6e3; border-bottom: 1px solid #e6e6e3; white-space: nowrap; }
.mini .k { border-color: #333; }
.mini .kb { border-bottom-color: #333; }
.mini .kr { border-right-color: #333; }
.mini .c { text-align: center; padding: 0; }
.mini .r { text-align: right; }
.mini .b { font-weight: 700; color: #111; font-size: 15px; line-height: 22px; }
.mini .s { font-size: 14px; line-height: 20px; }
.mini .two { line-height: 22px; }
.mark { position: absolute; left: 113px; top: 169px; width: 260px; text-align: center; font: 25px/28px "Liberation Sans", sans-serif; color: rgba(80, 80, 80, .55); transform: rotate(-30deg); }
.vscroll { width: 15px; display: flex; flex-direction: column; align-items: center; padding: 3px 3px 1px 0; }
.vscroll svg { width: 9px; height: 8px; }
.vscroll i { width: 8px; flex: 1; margin: 4px 0 42px; border-radius: 4px; background: #6d6d6b; }

.sheets { display: flex; align-items: center; height: 28px; border-top: 1px solid #d8d8d5; padding-bottom: 2px; }
.nav { width: 29px; height: 24px; }
.nav:first-child { margin-left: 13px; }
.nav svg { width: 10px; height: 10px; }
.stab { margin-left: 31px; width: 50px; height: 24px; align-self: flex-start; background: #fdfdfa; font-weight: 700; font-size: 12px; color: #222; border-radius: 0 0 3px 3px; }
.stab span { border-bottom: 2px solid #1e6e46; line-height: 18px; }
.add { width: 24px; height: 24px; margin-left: 34px; }
.add svg { width: 10px; height: 10px; }
.hscroll { flex: 1; display: flex; align-items: center; margin-left: 517px; padding-right: 20px; }
.ar { width: 8px; height: 10px; }
.hscroll .dots { margin-right: 16px; }
.hscroll i { flex: 1; height: 8px; border-radius: 4px; background: #6d6d6b; margin: 0 46px 0 4px; }

.status { display: flex; align-items: center; height: 20px; background: #f5f5f2; border-top: 1px solid #fff; padding: 0 6px 2px 10px; font-size: 10px; }
.acc { margin-left: 15px; gap: 3px; font-weight: 600; }
.acc svg { width: 12px; height: 12px; }
.zoom { margin-left: auto; display: flex; align-items: center; }
.vw { width: 36px; height: 18px; }
.vw.on { background: #dededb; }
.vw svg { width: 11px; height: 11px; }
.pm { width: 18px; height: 18px; }
.pm svg { width: 7px; height: 7px; }
.zoom span { margin-left: 6px; }
.zoom input { appearance: none; width: 86px; height: 1px; background: #777; margin: 0; }
.zoom input::-webkit-slider-thumb { appearance: none; width: 4px; height: 10px; background: #555; }

.taskbar { display: flex; height: 36px; background: #1f1f1d; color: #fff; }
.start { width: 42px; }
.start svg { width: 15px; height: 15px; }
.tsearch { display: flex; align-items: center; width: 256px; background: #f3f3f0; padding: 0 5px 0 10px; gap: 10px; color: #333; font-size: 12px; }
.tsearch .boat { width: 62px; height: 34px; }
.apps { display: flex; }
.apps button { width: 43px; }
.apps button:nth-child(even) { width: 44px; }
.apps button:first-child { width: 42px; margin-right: 2px; }
.apps .run { background: linear-gradient(#7aa7dc, #7aa7dc) center bottom / 36px 2px no-repeat; }
.apps .active { background-color: #4a4a48; background-size: 100% 2px; }
.tray { margin-left: auto; display: flex; align-items: center; padding-right: 3px; }
.tray time { width: 62px; display: flex; flex-direction: column; align-items: center; font-size: 10px; line-height: 16px; }
.note { width: 34px; height: 36px; margin-right: 8px; }
```
FILE: script.js
```js
const COLUMNS = "ABCDEFGHIJKLMNOPQRS";
const SELECTED = 7;
const LAST_ROW = 16;

const grid = document.querySelector(".grid");
const head = grid.querySelector("thead tr");
[...COLUMNS].forEach((letter, i) => {
  const th = document.createElement("th");
  th.textContent = letter;
  if (i < SELECTED) th.className = "sel";
  head.append(th);
});

const body = grid.querySelector("tbody");
const addCells = (row, count) => {
  for (let i = 0; i < count; i++) row.append(document.createElement("td"));
};
[...body.rows].forEach(row => addCells(row, COLUMNS.length - SELECTED));
for (let n = 4; n <= LAST_ROW; n++) {
  const row = document.createElement("tr");
  const th = document.createElement("th");
  th.textContent = n;
  row.append(th);
  addCells(row, COLUMNS.length);
  body.append(row);
}
```
